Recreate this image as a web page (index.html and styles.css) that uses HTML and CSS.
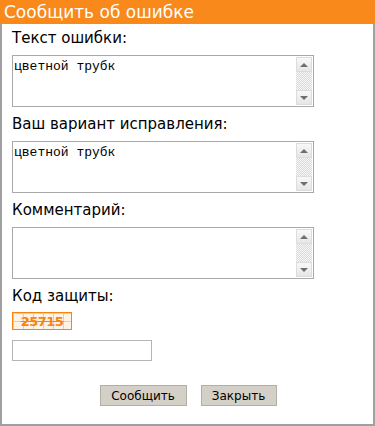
FILE: index.html
```html
<!DOCTYPE html>
<html lang="ru">
<head>
    <meta charset="UTF-8">
    <meta name="viewport" content="width=device-width, initial-scale=1.0">
    <title>Сообщить об ошибке</title>
    <link rel="stylesheet" href="styles.css">
</head>
<body>
    <div class="report-box">
        <div class="report-header">Сообщить об ошибке</div>
        <form class="report-form">
            <div class="field-label">Текст ошибки:</div>
            <div class="text-box">
                <textarea class="text-area">цветной трубк</textarea>
                <div class="scroll-bar">
                    <div class="scroll-btn"><span class="arrow-up"></span></div>
                    <div class="scroll-track"></div>
                    <div class="scroll-btn"><span class="arrow-down"></span></div>
                </div>
            </div>

            <div class="field-label">Ваш вариант исправления:</div>
            <div class="text-box">
                <textarea class="text-area">цветной трубк</textarea>
                <div class="scroll-bar">
                    <div class="scroll-btn"><span class="arrow-up"></span></div>
                    <div class="scroll-track"></div>
                    <div class="scroll-btn"><span class="arrow-down"></span></div>
                </div>
            </div>

            <div class="field-label">Комментарий:</div>
            <div class="text-box">
                <textarea class="text-area"></textarea>
                <div class="scroll-bar">
                    <div class="scroll-btn"><span class="arrow-up"></span></div>
                    <div class="scroll-track"></div>
                    <div class="scroll-btn"><span class="arrow-down"></span></div>
                </div>
            </div>

            <div class="field-label">Код защиты:</div>
            <div class="captcha"><span class="captcha-code">25715</span></div>
            <input class="captcha-input" type="text">

            <div class="form-buttons">
                <button type="submit" class="form-btn btn-send">Сообщить</button>
                <button type="button" class="form-btn btn-close">Закрыть</button>
            </div>
        </form>
    </div>
</body>
</html>
```

FILE: styles.css
```css
body, html {
    margin: 0;
    padding: 0;
    background-color: #ffffff;
    font-family: "DejaVu Sans", Verdana, sans-serif;
}
.report-box {
    width: 375px;
    height: 426px;
    display: flex;
    flex-direction: column;
}
.report-header {
    height: 24px;
    line-height: 24px;
    background-color: #f8891a;
    color: #ffffff;
    font-size: 17px;
    padding-left: 4px;
}
.report-form {
    flex-grow: 1;
    margin: 0;
    padding: 5px 10px 0 10px;
    border: 2px solid #a0a0a0;
    border-top: none;
    display: flex;
    flex-direction: column;
    align-items: flex-start;
}
.field-label {
    font-size: 15px;
    line-height: 18px;
    color: #000000;
    margin-bottom: 8px;
}
.text-box {
    width: 302px;
    height: 52px;
    box-sizing: border-box;
    border: 1px solid #a9a9a9;
    display: flex;
    margin-bottom: 8px;
    background-color: #ffffff;
}
.text-area {
    flex-grow: 1;
    border: none;
    resize: none;
    outline: none;
    padding: 3px 1px;
    margin: 0;
    font-family: "Liberation Mono", "Courier New", monospace;
    font-size: 13px;
    line-height: 15px;
    color: #000000;
    overflow: hidden;
}
.scroll-bar {
    width: 16px;
    display: flex;
    flex-direction: column;
    padding: 1px 1px 1px 0;
}
.scroll-btn {
    height: 15px;
    box-sizing: border-box;
    border: 1px solid #dcdcdc;
    background: linear-gradient(#f8f8f8, #e6e6e6);
    display: flex;
    align-items: center;
    justify-content: center;
}
.scroll-track {
    flex-grow: 1;
    background-color: #f2f2f2;
    background-image: repeating-conic-gradient(#dadada 0 25%, #f6f6f6 0 50%);
    background-size: 2px 2px;
}
.arrow-up, .arrow-down {
    width: 0;
    height: 0;
    border-left: 4px solid transparent;
    border-right: 4px solid transparent;
}
.arrow-up {
    border-bottom: 4px solid #6e6e6e;
}
.arrow-down {
    border-top: 4px solid #6e6e6e;
}
.captcha {
    width: 60px;
    height: 18px;
    box-sizing: border-box;
    margin-top: -1px;
    border: 1px solid #f7850f;
    background-color: #fff3e6;
    background-image:
        linear-gradient(90deg, #fcc792 1px, transparent 1px),
        linear-gradient(#fcc792 1px, transparent 1px);
    background-size: 10px 8px;
    display: flex;
    align-items: center;
    justify-content: center;
}
.captcha-code {
    color: #f7850f;
    font-family: "DejaVu Sans", Verdana, sans-serif;
    font-size: 13px;
    font-weight: bold;
    line-height: 15px;
    text-decoration: line-through;
    letter-spacing: -0.5px;
}
.captcha-input {
    width: 140px;
    height: 21px;
    box-sizing: border-box;
    margin: 10px 0 0 0;
    border: 1px solid #b5b5b5;
    padding: 2px;
}
.form-buttons {
    align-self: stretch;
    display: flex;
    justify-content: center;
    gap: 14px;
    margin-top: 24px;
    padding-left: 1px;
}
.form-btn {
    height: 21px;
    box-sizing: border-box;
    background-color: #d4d0c8;
    border: 1px solid #b2aea6;
    font-family: "DejaVu Sans", Tahoma, sans-serif;
    font-size: 12px;
    color: #000000;
    padding: 0;
    cursor: pointer;
}
.btn-send {
    width: 87px;
}
.btn-close {
    width: 76px;
}
```
